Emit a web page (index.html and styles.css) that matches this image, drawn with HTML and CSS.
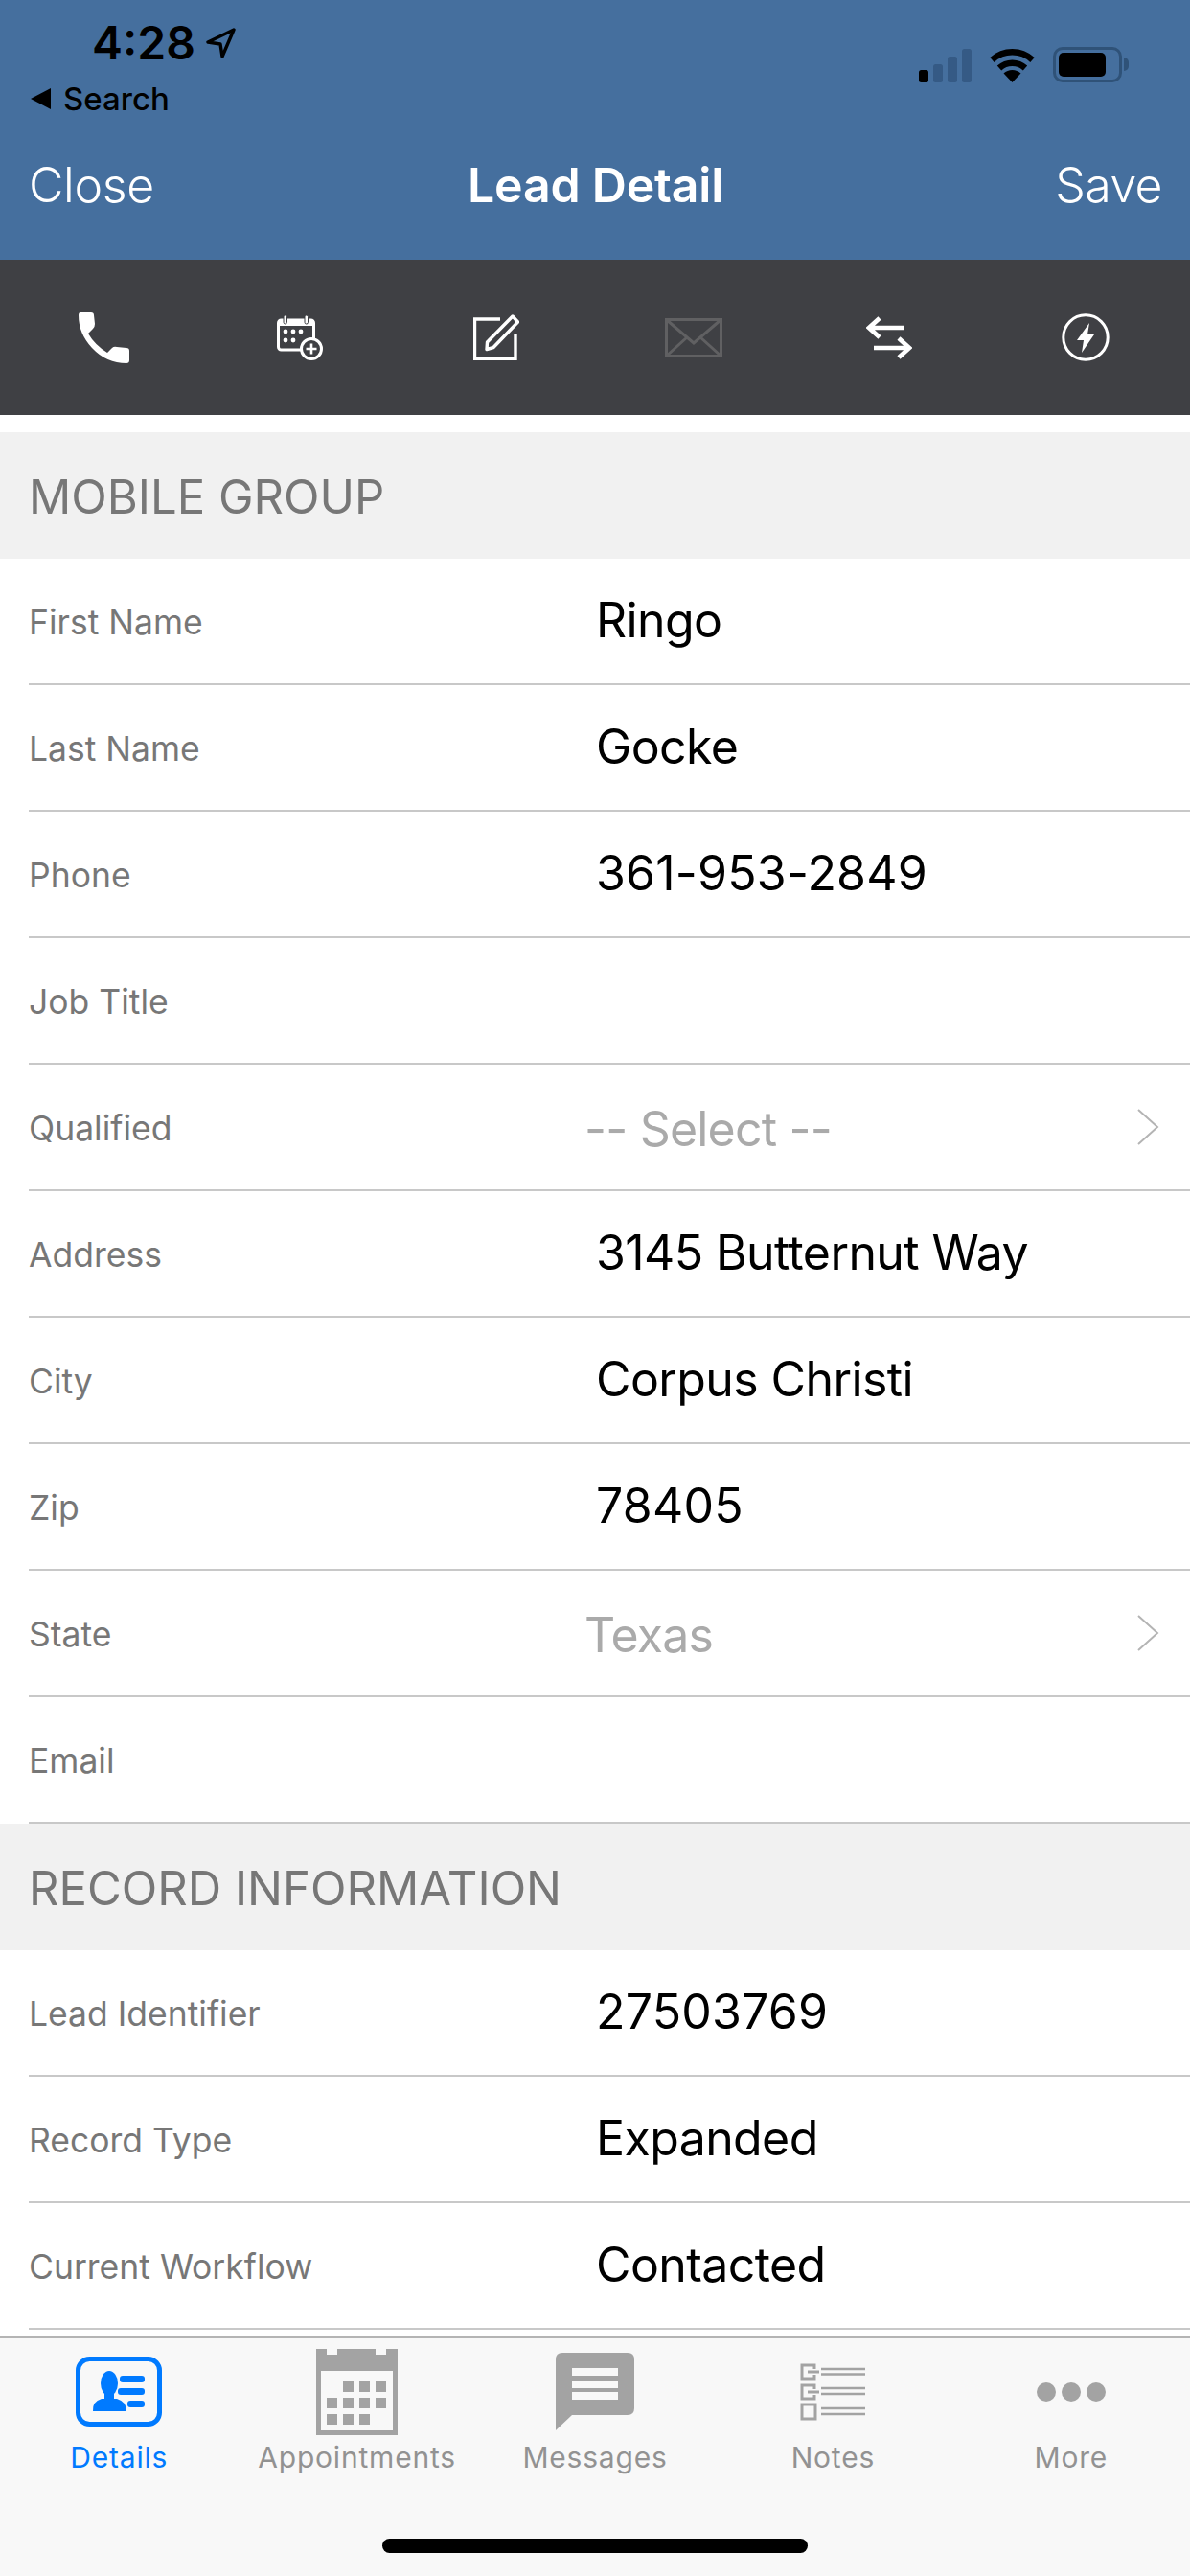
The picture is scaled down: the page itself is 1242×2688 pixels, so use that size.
FILE: index.html
```html
<!DOCTYPE html>
<html lang="en">
<head>
<meta charset="utf-8">
<title>Lead Detail</title>
<link rel="stylesheet" href="styles.css">
</head>
<body>
<div class="app">
  <header class="header">
    <div class="status">
      <div class="time-group">
        <span class="time">4:28</span>
        <svg class="loc" width="31" height="32" viewBox="0 0 31 32"><path d="M29 2 L2 15 L15 17 L17 30 Z" fill="none" stroke="#000" stroke-width="3.4" stroke-linejoin="round"/></svg>
      </div>
      <div class="status-icons">
        <svg class="signal" width="55" height="35" viewBox="0 0 55 35">
          <rect x="0" y="22" width="10" height="13" rx="2.5" fill="#000"/>
          <rect x="15" y="16" width="10" height="19" rx="2.5" fill="#355a85"/>
          <rect x="30" y="8" width="10" height="27" rx="2.5" fill="#355a85"/>
          <rect x="45" y="0" width="10" height="35" rx="2.5" fill="#355a85"/>
        </svg>
        <svg class="wifi" width="47" height="36" viewBox="0 0 47 36">
          <path d="M2.5 12.5 A31 31 0 0 1 44.5 12.5" fill="none" stroke="#000" stroke-width="6.5"/>
          <path d="M10 21 A20 20 0 0 1 37 21" fill="none" stroke="#000" stroke-width="6.5"/>
          <path d="M23.5 36 L14.5 26.5 A13 13 0 0 1 32.5 26.5 Z" fill="#000"/>
        </svg>
        <div class="battery"><div class="battery-level"></div></div>
        <div class="battery-nub"></div>
      </div>
    </div>
    <div class="back"><span class="back-arrow"></span><span class="back-text">Search</span></div>
    <nav class="nav">
      <span class="nav-btn">Close</span>
      <span class="nav-title">Lead Detail</span>
      <span class="nav-btn nav-end">Save</span>
    </nav>
  </header>

  <div class="toolbar">
    <div class="tool">
      <svg width="54" height="53" viewBox="0 0 54 53"><path d="M3 0 H14 Q17 0 17 3 L18 12 Q18 15 16 17 L11 22 Q18 34 31 42 L36 37 Q38 35 41 36 L51 37 Q54 37 54 40 V50 Q54 53 51 53 Q30 53 15 37 Q1 22 1 3 Q1 0 3 0 Z" fill="#fff"/></svg>
    </div>
    <div class="tool">
      <svg width="48" height="47" viewBox="0 0 48 47">
        <rect x="1.5" y="5" width="37" height="31" rx="3" fill="none" stroke="#fff" stroke-width="3"/>
        <rect x="1.5" y="5" width="37" height="6" fill="#fff"/>
        <rect x="7" y="0" width="3.5" height="9" rx="1.7" fill="#fff" stroke="#3f4044" stroke-width="1"/>
        <rect x="29" y="0" width="3.5" height="9" rx="1.7" fill="#fff" stroke="#3f4044" stroke-width="1"/>
        <circle cx="9" cy="17" r="2.4" fill="#fff"/><circle cx="17" cy="17" r="2.4" fill="#fff"/><circle cx="25" cy="17" r="2.4" fill="#fff"/>
        <circle cx="9" cy="26" r="2.4" fill="#fff"/><circle cx="17" cy="26" r="2.4" fill="#fff"/>
        <circle cx="36" cy="35" r="10.5" fill="#3f4044" stroke="#fff" stroke-width="3"/>
        <path d="M36 29.5 V40.5 M30.5 35 H41.5" stroke="#fff" stroke-width="2.6" fill="none"/>
      </svg>
    </div>
    <div class="tool">
      <svg width="48" height="48" viewBox="0 0 48 48">
        <path d="M28 5 H1.5 V46.5 H44 V20" fill="none" stroke="#fff" stroke-width="3.4"/>
        <path d="M41 2 L46.5 8 L21 34.5 L14 36.5 L14.5 29 Z" fill="none" stroke="#fff" stroke-width="3.4" stroke-linejoin="round"/>
      </svg>
    </div>
    <div class="tool tool-env">
      <svg width="60" height="41" viewBox="0 0 60 41" fill="none" stroke="#606062" stroke-width="3">
        <rect x="1.5" y="1.5" width="57" height="38"/>
        <path d="M2 2 L30 26 L58 2 M2 39 L23 20 M58 39 L37 20"/>
      </svg>
    </div>
    <div class="tool">
      <svg width="48" height="45" viewBox="0 0 48 45" fill="none" stroke="#fff" stroke-width="4.6">
        <path d="M3 12 H40 M14 2 L3 12 L14 22"/>
        <path d="M8 33 H45 M34 23 L45 33 L34 43"/>
      </svg>
    </div>
    <div class="tool">
      <svg width="50" height="50" viewBox="0 0 50 50">
        <circle cx="25" cy="25" r="23.2" fill="none" stroke="#fff" stroke-width="3"/>
        <path d="M29 10 L16 28 H23 L21 41 L34 22 H27 Z" fill="#fff"/>
      </svg>
    </div>
  </div>

  <main class="content">
    <h2 class="section">MOBILE GROUP</h2>
    <div class="row"><span class="label">First Name</span><span class="value">Ringo</span></div>
    <div class="row"><span class="label">Last Name</span><span class="value">Gocke</span></div>
    <div class="row"><span class="label">Phone</span><span class="value num">361-953-2849</span></div>
    <div class="row"><span class="label">Job Title</span><span class="value"></span></div>
    <div class="row"><span class="label">Qualified</span><span class="value muted">-- Select --</span>
      <svg class="chevron" width="24" height="38" viewBox="0 0 24 38"><path d="M2 1 L22 19 L2 37" fill="none" stroke="#b4b4b4" stroke-width="2"/></svg></div>
    <div class="row"><span class="label">Address</span><span class="value">3145 Butternut Way</span></div>
    <div class="row"><span class="label">City</span><span class="value">Corpus Christi</span></div>
    <div class="row"><span class="label">Zip</span><span class="value num">78405</span></div>
    <div class="row"><span class="label">State</span><span class="value muted">Texas</span>
      <svg class="chevron" width="24" height="38" viewBox="0 0 24 38"><path d="M2 1 L22 19 L2 37" fill="none" stroke="#b4b4b4" stroke-width="2"/></svg></div>
    <div class="row"><span class="label">Email</span><span class="value"></span></div>
    <h2 class="section">RECORD INFORMATION</h2>
    <div class="row"><span class="label">Lead Identifier</span><span class="value num">27503769</span></div>
    <div class="row"><span class="label">Record Type</span><span class="value">Expanded</span></div>
    <div class="row"><span class="label">Current Workflow</span><span class="value">Contacted</span></div>
  </main>

  <footer class="tabbar">
    <div class="tabs">
      <div class="tab active">
        <div class="tab-icon">
          <svg width="90" height="73" viewBox="0 0 90 73" fill="#007aff">
            <rect x="2.5" y="2.5" width="85" height="68" rx="12" fill="none" stroke="#007aff" stroke-width="5"/>
            <ellipse cx="35" cy="28" rx="9" ry="13"/>
            <rect x="30" y="36" width="10" height="10"/>
            <path d="M18 57 Q17 47 27 44 L43 44 Q53 47 53 57 Z"/>
            <rect x="46" y="20" width="26" height="7" rx="3"/>
            <rect x="44" y="33" width="28" height="7" rx="3"/>
            <rect x="54" y="46" width="18" height="7" rx="3"/>
          </svg>
        </div>
        <span class="tab-label">Details</span>
      </div>
      <div class="tab">
        <div class="tab-icon">
          <svg width="85" height="90" viewBox="0 0 85 90" fill="#a3a3a3">
            <path fill-rule="evenodd" d="M0 0 H11 V6 H22 V0 H62 V6 H73 V0 H85 V90 H0 Z M5 23 V85 H80 V23 Z"/>
            <rect x="28" y="33" width="11" height="12"/><rect x="45" y="33" width="11" height="12"/><rect x="62" y="33" width="11" height="12"/>
            <rect x="11" y="51" width="11" height="11"/><rect x="28" y="51" width="11" height="11"/><rect x="45" y="51" width="11" height="11"/><rect x="62" y="51" width="11" height="11"/>
            <rect x="11" y="68" width="11" height="11"/><rect x="28" y="68" width="11" height="11"/><rect x="45" y="68" width="11" height="11"/>
          </svg>
        </div>
        <span class="tab-label">Appointments</span>
      </div>
      <div class="tab">
        <div class="tab-icon">
          <svg width="82" height="81" viewBox="0 0 82 81">
            <path d="M7 0 H75 Q82 0 82 7 V58 Q82 65 75 65 H17 L0 81 V7 Q0 0 7 0 Z" fill="#a3a3a3"/>
            <rect x="17" y="16" width="48" height="8" fill="#f8f8f8"/>
            <rect x="17" y="29" width="48" height="8" fill="#f8f8f8"/>
            <rect x="17" y="41" width="48" height="8" fill="#f8f8f8"/>
          </svg>
        </div>
        <span class="tab-label">Messages</span>
      </div>
      <div class="tab">
        <div class="tab-icon">
          <svg width="68" height="60" viewBox="0 0 68 60" fill="none" stroke="#a3a3a3" stroke-width="3">
            <path d="M15 6 V2 H2 V16 H15 V12 M8 9 H20"/>
            <path d="M15 27 V23 H2 V37 H15 V33 M8 30 H20"/>
            <rect x="2" y="43" width="14" height="15"/>
            <path d="M22 6 H68 M22 11.5 H68 M22 26 H68 M22 32 H68 M22 47 H68 M22 53 H68" stroke-width="2.4"/>
          </svg>
        </div>
        <span class="tab-label">Notes</span>
      </div>
      <div class="tab">
        <div class="tab-icon">
          <div class="dots"><span class="dot"></span><span class="dot"></span><span class="dot"></span></div>
        </div>
        <span class="tab-label">More</span>
      </div>
    </div>
    <div class="home-indicator"></div>
  </footer>
</div>
</body>
</html>
```
FILE: styles.css
```css
* { box-sizing: border-box; }
html, body { margin: 0; padding: 0; }
body { width: 1242px; height: 2688px; overflow: hidden; background: #fff; font-family: Inter, "Liberation Sans", sans-serif; }
.app { display: flex; flex-direction: column; height: 2688px; }

.header { height: 271px; background: #456f9e; display: flex; flex-direction: column; }
.status { height: 86px; display: flex; justify-content: space-between; padding: 0 64px 0 96px; }
.time-group { display: flex; align-items: center; gap: 11px; height: 90px; }
.time { font-size: 48px; font-weight: 600; color: #000; line-height: 90px; }
.status-icons { display: flex; align-items: flex-end; height: 86px; }
.signal { margin-right: 19px; }
.wifi { margin-right: 19px; }
.battery { width: 72px; height: 37px; border: 3px solid #2f5278; border-radius: 10px; padding: 3px; }
.battery-level { width: 49px; height: 25px; background: #000; border-radius: 5px; }
.battery-nub { width: 5px; height: 14px; margin: 0 0 12px 2px; background: #2f5278; border-radius: 0 5px 5px 0; }

.back { height: 34px; display: flex; align-items: center; padding-left: 32px; gap: 13px; }
.back-arrow { width: 0; height: 0; border-style: solid; border-width: 11px 21px 11px 0; border-color: transparent #000 transparent transparent; }
.back-text { font-size: 33px; font-weight: 500; color: #000; line-height: 34px; }

.nav { flex: 1; display: grid; grid-template-columns: 1fr auto 1fr; align-items: center; padding: 0 29px 5px 30px; }
.nav-btn { font-size: 50px; font-weight: 300; color: #fff; letter-spacing: -0.3px; }
.nav-end { text-align: right; letter-spacing: -0.6px; }
.nav-title { font-size: 50px; font-weight: 600; color: #fff; letter-spacing: -0.2px; }

.toolbar { height: 162px; background: #3f4044; display: grid; grid-template-columns: repeat(6, 205px); padding-left: 5px; align-items: center; }
.tool { display: flex; justify-content: center; align-items: center; }
.tool svg { display: block; }
.tool-env { padding-left: 3px; }

.content { flex: 1; overflow: hidden; padding-top: 18px; background: #fff; }
.section { margin: 0; height: 132px; background: #f1f1f1; color: #777; font-size: 49px; font-weight: 400; line-height: 135px; padding-left: 30px; }
.row { height: 132px; margin-left: 30px; border-bottom: 2px solid #c8c8c8; display: grid; grid-template-columns: 580px 1fr auto; align-items: center; padding-right: 32px; }
.label { font-size: 35.5px; color: #777; padding: 2px 0 0 0; }
.value { font-size: 50px; color: #000; padding: 0 0 2px 12px; letter-spacing: -0.6px; }
.num { letter-spacing: 0.2px; }
.muted { color: #aaa; padding: 3px 0 0 0; letter-spacing: -0.8px; }
.chevron { display: block; }

.tabbar { height: 250px; background: #f8f8f8; border-top: 2px solid #b4b4b4; display: flex; flex-direction: column; }
.tabs { display: grid; grid-template-columns: repeat(5, 1fr); }
.tab { display: flex; flex-direction: column; align-items: center; color: #929292; }
.tab.active { color: #007aff; }
.tab-icon { height: 102px; display: flex; align-items: center; justify-content: center; padding-top: 9px; }
.tab-icon svg { display: block; }
.tab-label { font-size: 30px; line-height: 36px; margin-top: 4px; letter-spacing: 0.8px; }
.dots { display: flex; gap: 6px; }
.dot { width: 20px; height: 20px; border-radius: 50%; background: #a3a3a3; }
.home-indicator { width: 444px; height: 15px; border-radius: 8px; background: #000; margin: auto auto 24px; }
```
